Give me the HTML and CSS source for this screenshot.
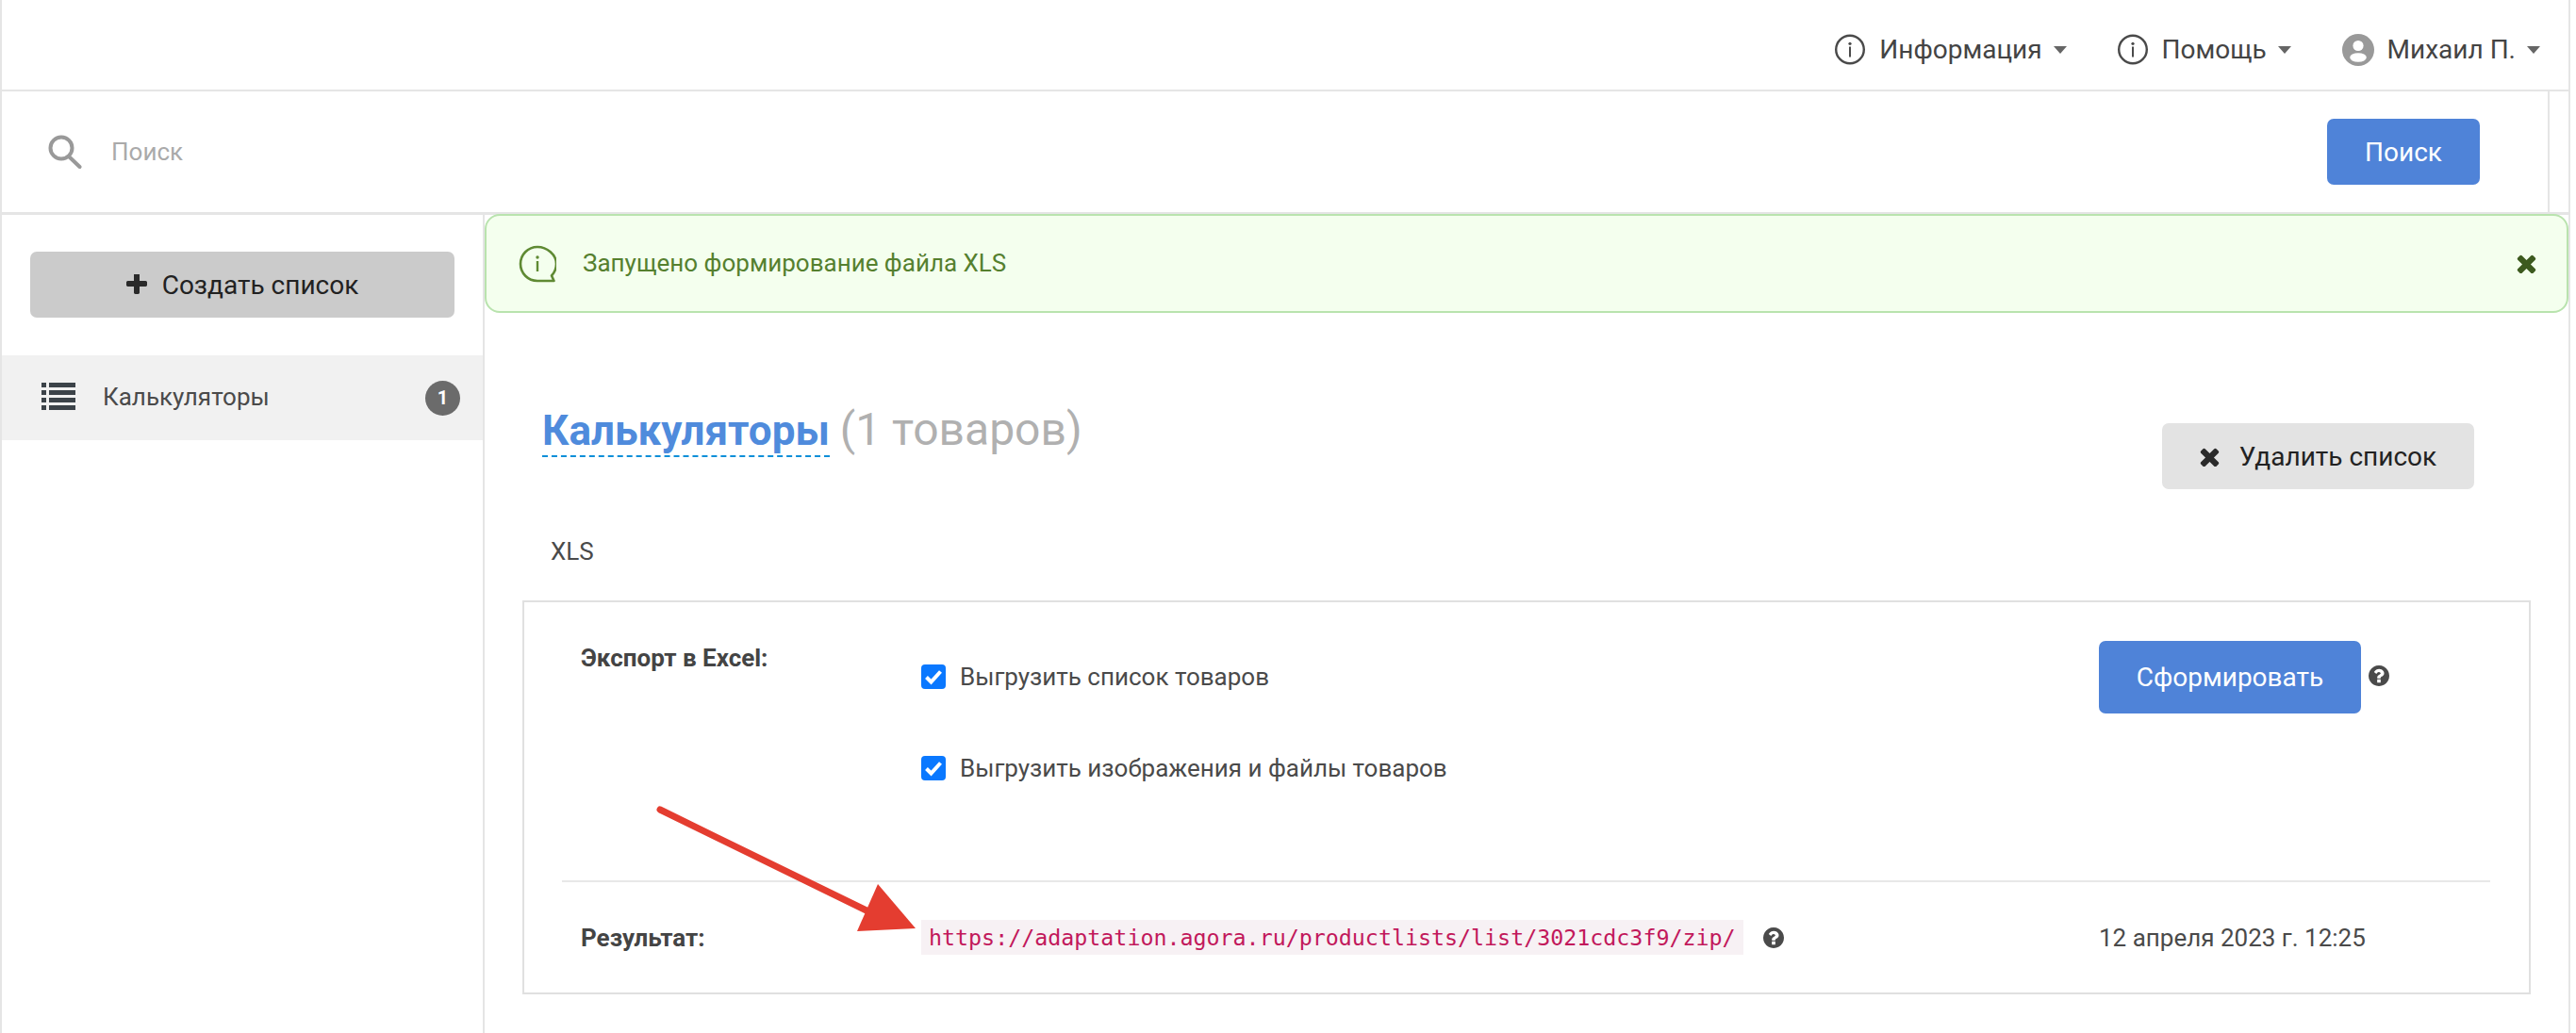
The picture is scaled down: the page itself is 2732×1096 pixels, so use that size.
FILE: index.html
```html
<!DOCTYPE html>
<html lang="ru">
<head>
<meta charset="utf-8">
<title>Калькуляторы</title>
<link rel="stylesheet" href="styles.css">
</head>
<body>
<div class="app">
  <header class="topbar">
    <a class="menu-item">
      <svg class="menu-icon" viewBox="0 0 32 32"><circle cx="16" cy="16" r="14.8" fill="none" stroke="#4a4a4a" stroke-width="2.400"/><circle cx="16" cy="9.800" r="1.600" fill="#4a4a4a"/><rect x="15" y="13" width="2" height="11" fill="#4a4a4a"/></svg>
      <span>Информация</span><i class="caret"></i>
    </a>
    <a class="menu-item">
      <svg class="menu-icon" viewBox="0 0 32 32"><circle cx="16" cy="16" r="14.8" fill="none" stroke="#4a4a4a" stroke-width="2.400"/><circle cx="16" cy="9.800" r="1.600" fill="#4a4a4a"/><rect x="15" y="13" width="2" height="11" fill="#4a4a4a"/></svg>
      <span>Помощь</span><i class="caret"></i>
    </a>
    <a class="menu-item">
      <svg class="menu-icon user" viewBox="0 0 34 34"><circle cx="17" cy="17" r="17" fill="#999"/><circle cx="17" cy="12.500" r="5.600" fill="#fff"/><ellipse cx="17" cy="25" rx="8.800" ry="4.800" fill="#fff"/></svg>
      <span>Михаил П.</span><i class="caret"></i>
    </a>
  </header>

  <section class="searchbar">
    <svg class="search-icon" viewBox="0 0 36 36"><circle cx="14" cy="14" r="11.500" fill="none" stroke="#999" stroke-width="4"/><line x1="22" y1="23" x2="33.500" y2="34" stroke="#999" stroke-width="4" stroke-linecap="round"/></svg>
    <span class="placeholder">Поиск</span>
    <button class="btn btn-primary btn-search">Поиск</button>
    <div class="search-end"></div>
  </section>

  <div class="main">
    <aside class="sidebar">
      <button class="btn btn-create">
        <svg class="btn-icon plus" viewBox="192 192 1408 1408"><path d="M1600 736v192q0 40-28 68t-68 28h-416v416q0 40-28 68t-68 28h-192q-40 0-68-28t-28-68v-416h-416q-40 0-68-28t-28-68v-192q0-40 28-68t68-28h416v-416q0-40 28-68t68-28h192q40 0 68 28t28 68v416h416q40 0 68 28t28 68z"/></svg>
        Создать список
      </button>
      <div class="side-item">
        <svg class="list-icon" viewBox="0 0 36 29"><g fill="#3c4349"><rect y="0" width="5" height="5"/><rect x="8" y="0" width="28" height="5"/><rect y="8" width="5" height="5"/><rect x="8" y="8" width="28" height="5"/><rect y="16" width="5" height="5"/><rect x="8" y="16" width="28" height="5"/><rect y="24" width="5" height="5"/><rect x="8" y="24" width="28" height="5"/></g></svg>
        <span class="side-label">Калькуляторы</span>
        <span class="badge">1</span>
      </div>
    </aside>

    <main class="content">
      <div class="alert">
        <svg class="alert-icon" viewBox="0 0 40 40"><path d="M20 2C10 2 2 10 2 20s8 18 18 18h17.500l-2.500-5.500c3-3.200 5-7.500 5-12.500C40 10 30 2 20 2z" fill="none" stroke="#5f8a33" stroke-width="2.600" stroke-linejoin="round"/><circle cx="20" cy="13" r="1.700" fill="#5f8a33"/><rect x="18.800" y="17" width="2.400" height="11" fill="#5f8a33"/></svg>
        <span class="alert-text">Запущено формирование файла XLS</span>
        <svg class="alert-close" viewBox="256 256 1280 1280"><path d="M1490 1322q0 40-28 68l-136 136q-28 28-68 28t-68-28l-294-294-294 294q-28 28-68 28t-68-28l-136-136q-28-28-28-68t28-68l294-294-294-294q-28-28-28-68t28-68l136-136q28-28 68-28t68 28l294 294 294-294q28-28 68-28t68 28l136 136q28 28 28 68t-28 68l-294 294 294 294q28 28 28 68z"/></svg>
      </div>

      <div class="title-row">
        <h1 class="title"><a class="title-link">Калькуляторы</a> <span class="title-count">(1 товаров)</span></h1>
        <button class="btn btn-delete">
          <svg class="btn-icon cross" viewBox="256 256 1280 1280"><path d="M1490 1322q0 40-28 68l-136 136q-28 28-68 28t-68-28l-294-294-294 294q-28 28-68 28t-68-28l-136-136q-28-28-28-68t28-68l294-294-294-294q-28-28-28-68t28-68l136-136q28-28 68-28t68 28l294 294 294-294q28-28 68-28t68 28l136 136q28 28 28 68t-28 68l-294 294 294 294q28 28 28 68z"/></svg>
          Удалить список
        </button>
      </div>

      <div class="format">XLS</div>

      <section class="panel">
        <div class="panel-row export-row">
          <div class="panel-label">Экспорт в Excel:</div>
          <div class="checks">
            <label class="check"><span class="checkbox"><svg viewBox="0 0 26 26"><path d="M5.500 13.500l5 5 10-11" fill="none" stroke="#fff" stroke-width="4"/></svg></span>Выгрузить список товаров</label>
            <label class="check"><span class="checkbox"><svg viewBox="0 0 26 26"><path d="M5.500 13.500l5 5 10-11" fill="none" stroke="#fff" stroke-width="4"/></svg></span>Выгрузить изображения и файлы товаров</label>
          </div>
          <div class="action">
            <button class="btn btn-primary btn-generate">Сформировать</button>
            <svg class="help" viewBox="128 128 1536 1536"><path d="M1024 1376v-192q0-14-9-23t-23-9h-192q-14 0-23 9t-9 23v192q0 14 9 23t23 9h192q14 0 23-9t9-23zm256-672q0-88-55.500-163t-138.500-116-170-41q-243 0-371 213-15 24 8 42l132 100q7 6 19 6 16 0 25-12 53-68 86-92 34-24 86-24 48 0 85.500 26t37.500 59q0 38-20 61t-68 45q-63 28-115.500 86.500t-52.500 125.500v36q0 14 9 23t23 9h192q14 0 23-9t9-23q0-19 21.500-49.500t54.500-49.500q32-18 49-28.500t46-35 44.500-48 28-60.500 12.500-81zm384 192q0 209-103 385.500t-279.500 279.500-385.500 103-385.500-103-279.500-279.500-103-385.500 103-385.500 279.500-279.500 385.500-103 385.500 103 279.500 279.500 103 385.500z"/></svg>
          </div>
        </div>
        <hr class="divider">
        <div class="panel-row result-row">
          <div class="panel-label">Результат:</div>
          <div class="result">
            <code class="url">https://adaptation.agora.ru/productlists/list/3021cdc3f9/zip/</code>
            <svg class="help" viewBox="128 128 1536 1536"><path d="M1024 1376v-192q0-14-9-23t-23-9h-192q-14 0-23 9t-9 23v192q0 14 9 23t23 9h192q14 0 23-9t9-23zm256-672q0-88-55.500-163t-138.500-116-170-41q-243 0-371 213-15 24 8 42l132 100q7 6 19 6 16 0 25-12 53-68 86-92 34-24 86-24 48 0 85.500 26t37.500 59q0 38-20 61t-68 45q-63 28-115.500 86.500t-52.500 125.500v36q0 14 9 23t23 9h192q14 0 23-9t9-23q0-19 21.500-49.500t54.500-49.500q32-18 49-28.500t46-35 44.500-48 28-60.500 12.500-81zm384 192q0 209-103 385.500t-279.500 279.500-385.500 103-385.500-103-279.500-279.500-103-385.500 103-385.500 279.500-279.500 385.500-103 385.500 103 279.500 279.500 103 385.500z"/></svg>
          </div>
          <div class="date">12 апреля 2023 г. 12:25</div>
        </div>
      </section>
    </main>
  </div>

  <svg class="arrow" viewBox="0 0 290 150"><line x1="4" y1="4" x2="225" y2="112" stroke="#e43d30" stroke-width="7" stroke-linecap="round"/><path d="M235 83L275 130L213 133Z" fill="#e43d30"/></svg>
</div>
</body>
</html>
```
FILE: styles.css
```css
* { box-sizing: border-box; }
html, body { margin: 0; padding: 0; background: #fff; }
body { font-family: Roboto, "Noto Sans", sans-serif; font-size: 26px; color: #4a4a4a; }

.app {
  position: relative;
  width: 2726px;
  height: 1096px;
  overflow: hidden;
  border-left: 2px solid #e5e5e5;
  border-right: 2px solid #e5e5e5;
}

.topbar {
  display: flex;
  justify-content: flex-end;
  align-items: center;
  height: 97px;
  padding: 10px 30px 0 0;
  border-bottom: 2px solid #e5e5e5;
  gap: 54px;
  font-size: 28px;
  color: #444;
}
.menu-item { display: flex; align-items: center; }
.menu-icon { width: 32px; height: 33px; margin-right: 15px; }
.menu-icon.user { width: 34px; height: 34px; margin-right: 14px; }
.caret {
  width: 0; height: 0;
  margin-left: 12px;
  border-left: 7px solid transparent;
  border-right: 7px solid transparent;
  border-top: 8px solid #666;
}

.searchbar {
  display: flex;
  align-items: center;
  height: 131px;
  padding-left: 49px;
  border-bottom: 3px solid #e5e5e5;
}
.search-icon { width: 36px; height: 36px; margin-right: 31px; }
.placeholder { color: #aaa; }
.btn {
  display: flex;
  align-items: center;
  justify-content: center;
  border: 0;
  border-radius: 7px;
  font-family: inherit;
  font-size: 28px;
}
.btn-primary { background: #4f83d8; color: #fff; }
.btn-search { width: 162px; height: 70px; margin-left: auto; margin-right: 72px; }
.search-end { width: 2px; height: 100%; background: #e5e5e5; margin-right: 20px; }

.main { display: flex; height: 868px; }

.sidebar {
  flex: none;
  width: 512px;
  border-right: 2px solid #e5e5e5;
  padding-top: 39px;
}
.btn-create {
  width: 450px;
  height: 70px;
  margin: 0 0 40px 30px;
  background: #cbcbcb;
  color: #222;
}
.btn-icon { fill: #2a2a2a; }
.btn-icon.plus { width: 22px; height: 22px; margin-right: 16px; }
.btn-icon.cross { width: 21px; height: 21px; margin-right: 21px; }

.side-item {
  display: flex;
  align-items: center;
  height: 90px;
  padding: 0 24px 0 42px;
  background: #f1f1f1;
}
.list-icon { width: 36px; height: 29px; margin: 0 29px 4px 0; }
.side-label { flex: 1; padding-bottom: 2px; }
.badge {
  display: flex;
  align-items: center;
  justify-content: center;
  width: 37px;
  height: 37px;
  border-radius: 50%;
  background: #6b6b6b;
  color: #fff;
  font-size: 20px;
  font-weight: 700;
}

.content { flex: 1; min-width: 0; }

.alert {
  display: flex;
  align-items: center;
  height: 105px;
  margin-top: -1px;
  padding: 0 32px 0 34px;
  border: 2px solid #b9e3ae;
  border-radius: 16px;
  background: #f4ffee;
  color: #55802f;
}
.alert-icon { width: 40px; height: 40px; margin-right: 28px; }
.alert-text { flex: 1; padding-bottom: 2px; }
.alert-close { width: 21px; height: 21px; fill: #3c5a1e; }

.title-row {
  display: flex;
  justify-content: space-between;
  align-items: flex-start;
  height: 89px;
  margin-top: 98px;
  padding: 0 100px 0 61px;
}
.title { margin: 0; font-size: 44px; line-height: 52px; font-weight: 400; color: #b0b0b0; }
.title-link { font-weight: 700; color: #4f8bdc; border-bottom: 2px dashed #0d8fd8; }
.title-count { font-size: 48px; line-height: 52px; }
.btn-delete {
  width: 331px;
  height: 70px;
  margin-top: 19px;
  background: #e3e3e3;
  color: #222;
}

.format { margin: 48px 0 34px 70px; line-height: 36px; }

.panel {
  width: 2130px;
  height: 418px;
  margin-left: 40px;
  border: 2px solid #e0e0e0;
}
.panel-row {
  display: grid;
  grid-template-columns: 361px 1249px 1fr;
  padding-left: 60px;
}
.export-row { align-items: start; height: 295px; padding-top: 41px; }
.panel-label { font-weight: 700; line-height: 36px; color: #444; }
.checks { display: flex; flex-direction: column; gap: 61px; margin-top: 20px; }
.check { display: flex; align-items: center; line-height: 36px; }
.checkbox {
  display: block;
  width: 26px;
  height: 26px;
  margin-right: 15px;
  border-radius: 4px;
  background: #0a78ff;
}
.checkbox svg { display: block; width: 26px; height: 26px; }
.action { display: flex; align-items: flex-start; }
.btn-generate { width: 278px; height: 77px; margin-right: 8px; }
.help { width: 22px; height: 22px; fill: #4a4a4a; flex: none; }
.action .help { margin-top: 26px; }

.divider { height: 2px; margin: 0 41px 0 40px; border: 0; background: #e8e8e8; }
.result-row { align-items: center; height: 117px; }
.result { display: flex; align-items: center; }
.url {
  padding: 0 8px;
  height: 37px;
  line-height: 37px;
  background: #f7f1f4;
  color: #c2185b;
  font-family: "DejaVu Sans Mono", "Liberation Mono", monospace;
  font-size: 23.3px;
  font-weight: 400;
  white-space: nowrap;
}
.result .help { margin-left: 21px; }

.arrow {
  position: absolute;
  left: 694px;
  top: 855px;
  width: 290px;
  height: 150px;
}
```
